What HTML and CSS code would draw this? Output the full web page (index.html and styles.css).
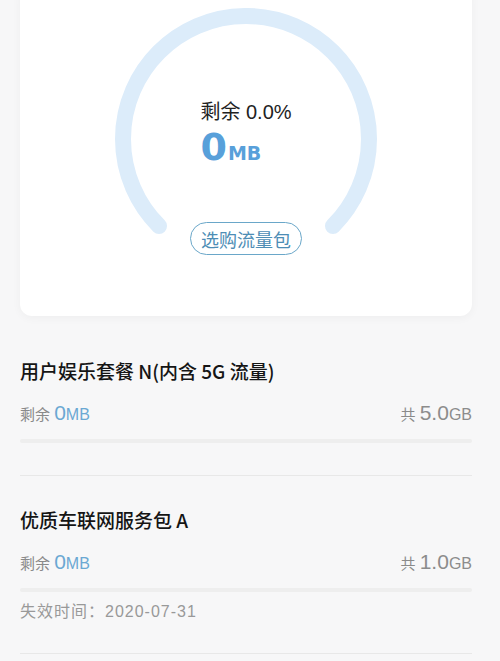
FILE: index.html
```html
<!DOCTYPE html>
<html lang="zh-CN">
<head>
    <meta charset="UTF-8">
    <meta name="viewport" content="width=device-width, initial-scale=1.0">
    <title>流量详情</title>
    <link rel="stylesheet" href="styles.css">
</head>
<body>
    <div class="card">
        <div class="gauge">
            <svg class="gauge-ring" width="262" height="248" viewBox="0 0 262 248">
                <path d="M44.03 217.97 A123 123 0 1 1 217.97 217.97" fill="none" stroke="#dcecfa" stroke-width="16" stroke-linecap="round"/>
            </svg>
            <div class="gauge-text">
                <p class="gauge-label">剩余 0.0%</p>
                <p class="gauge-value">0<span>MB</span></p>
            </div>
            <button class="buy-btn">选购流量包</button>
        </div>
    </div>

    <div class="package">
        <h3 class="package-name">用户娱乐套餐 N(内含 5G 流量)</h3>
        <div class="package-row">
            <span class="remain">剩余 <b>0</b><small>MB</small></span>
            <span class="total">共 <b>5.0</b><small>GB</small></span>
        </div>
        <div class="bar"></div>
    </div>

    <div class="package">
        <h3 class="package-name">优质车联网服务包 A</h3>
        <div class="package-row">
            <span class="remain">剩余 <b>0</b><small>MB</small></span>
            <span class="total">共 <b>1.0</b><small>GB</small></span>
        </div>
        <div class="bar"></div>
        <p class="expire">失效时间：2020-07-31</p>
    </div>
</body>
</html>
```

FILE: styles.css
```css
body {
    margin: 0;
    background: #f7f7f8;
    font-family: "Liberation Sans", "Noto Sans CJK SC", sans-serif;
    color: #1a1a1a;
}
p, h3 {
    margin: 0;
}
.card {
    margin: -16px 28px 11px 20px;
    padding: 24px 0 60px;
    background: #fff;
    border-radius: 12px;
    box-shadow: 0 2px 10px rgba(0, 0, 0, 0.04);
}
.gauge {
    display: grid;
    justify-items: center;
}
.gauge > * {
    grid-area: 1 / 1;
}
.gauge-ring {
    display: block;
}
.gauge-text {
    align-self: start;
    margin-top: 92px;
    text-align: left;
}
.gauge-label {
    font-size: 20px;
    line-height: 24px;
    color: #222;
}
.gauge-value {
    margin-top: 3px;
    font-family: "DejaVu Sans", sans-serif;
    font-size: 38px;
    line-height: 40px;
    font-weight: 700;
    color: #58a0da;
}
.gauge-value span {
    font-size: 19px;
    margin-left: 1px;
}
.buy-btn {
    align-self: end;
    margin-bottom: 1px;
    padding: 0 10px;
    height: 33px;
    border: 1.5px solid #6aa7c9;
    border-radius: 17px;
    background: #fff;
    color: #4d8db5;
    font-family: "Noto Sans CJK SC", sans-serif;
    font-size: 18px;
}
.package {
    margin: 0 28px 0 20px;
    padding: 31px 0 32px;
    border-bottom: 1px solid #e8e8e8;
}
.package-name {
    font-family: "Noto Sans CJK SC", sans-serif;
    font-size: 19px;
    line-height: 26px;
    font-weight: 500;
    color: #151515;
}
.package-row {
    display: flex;
    justify-content: space-between;
    align-items: baseline;
    margin-top: 15px;
    line-height: 28px;
    font-size: 15px;
    color: #8a8a8a;
}
.package-row b {
    font-size: 21px;
    font-weight: 400;
}
.package-row small {
    font-size: 16px;
}
.remain b, .remain small {
    color: #6ba8d3;
}
.total b, .total small {
    color: #8c8c8c;
}
.bar {
    margin-top: 10px;
    height: 4px;
    border-radius: 2px;
    background: #eeeeee;
}
.expire {
    margin-top: 9px;
    font-size: 16px;
    line-height: 22px;
    color: #999;
    letter-spacing: 1px;
}
.package + .package {
    padding-bottom: 30px;
}
```
